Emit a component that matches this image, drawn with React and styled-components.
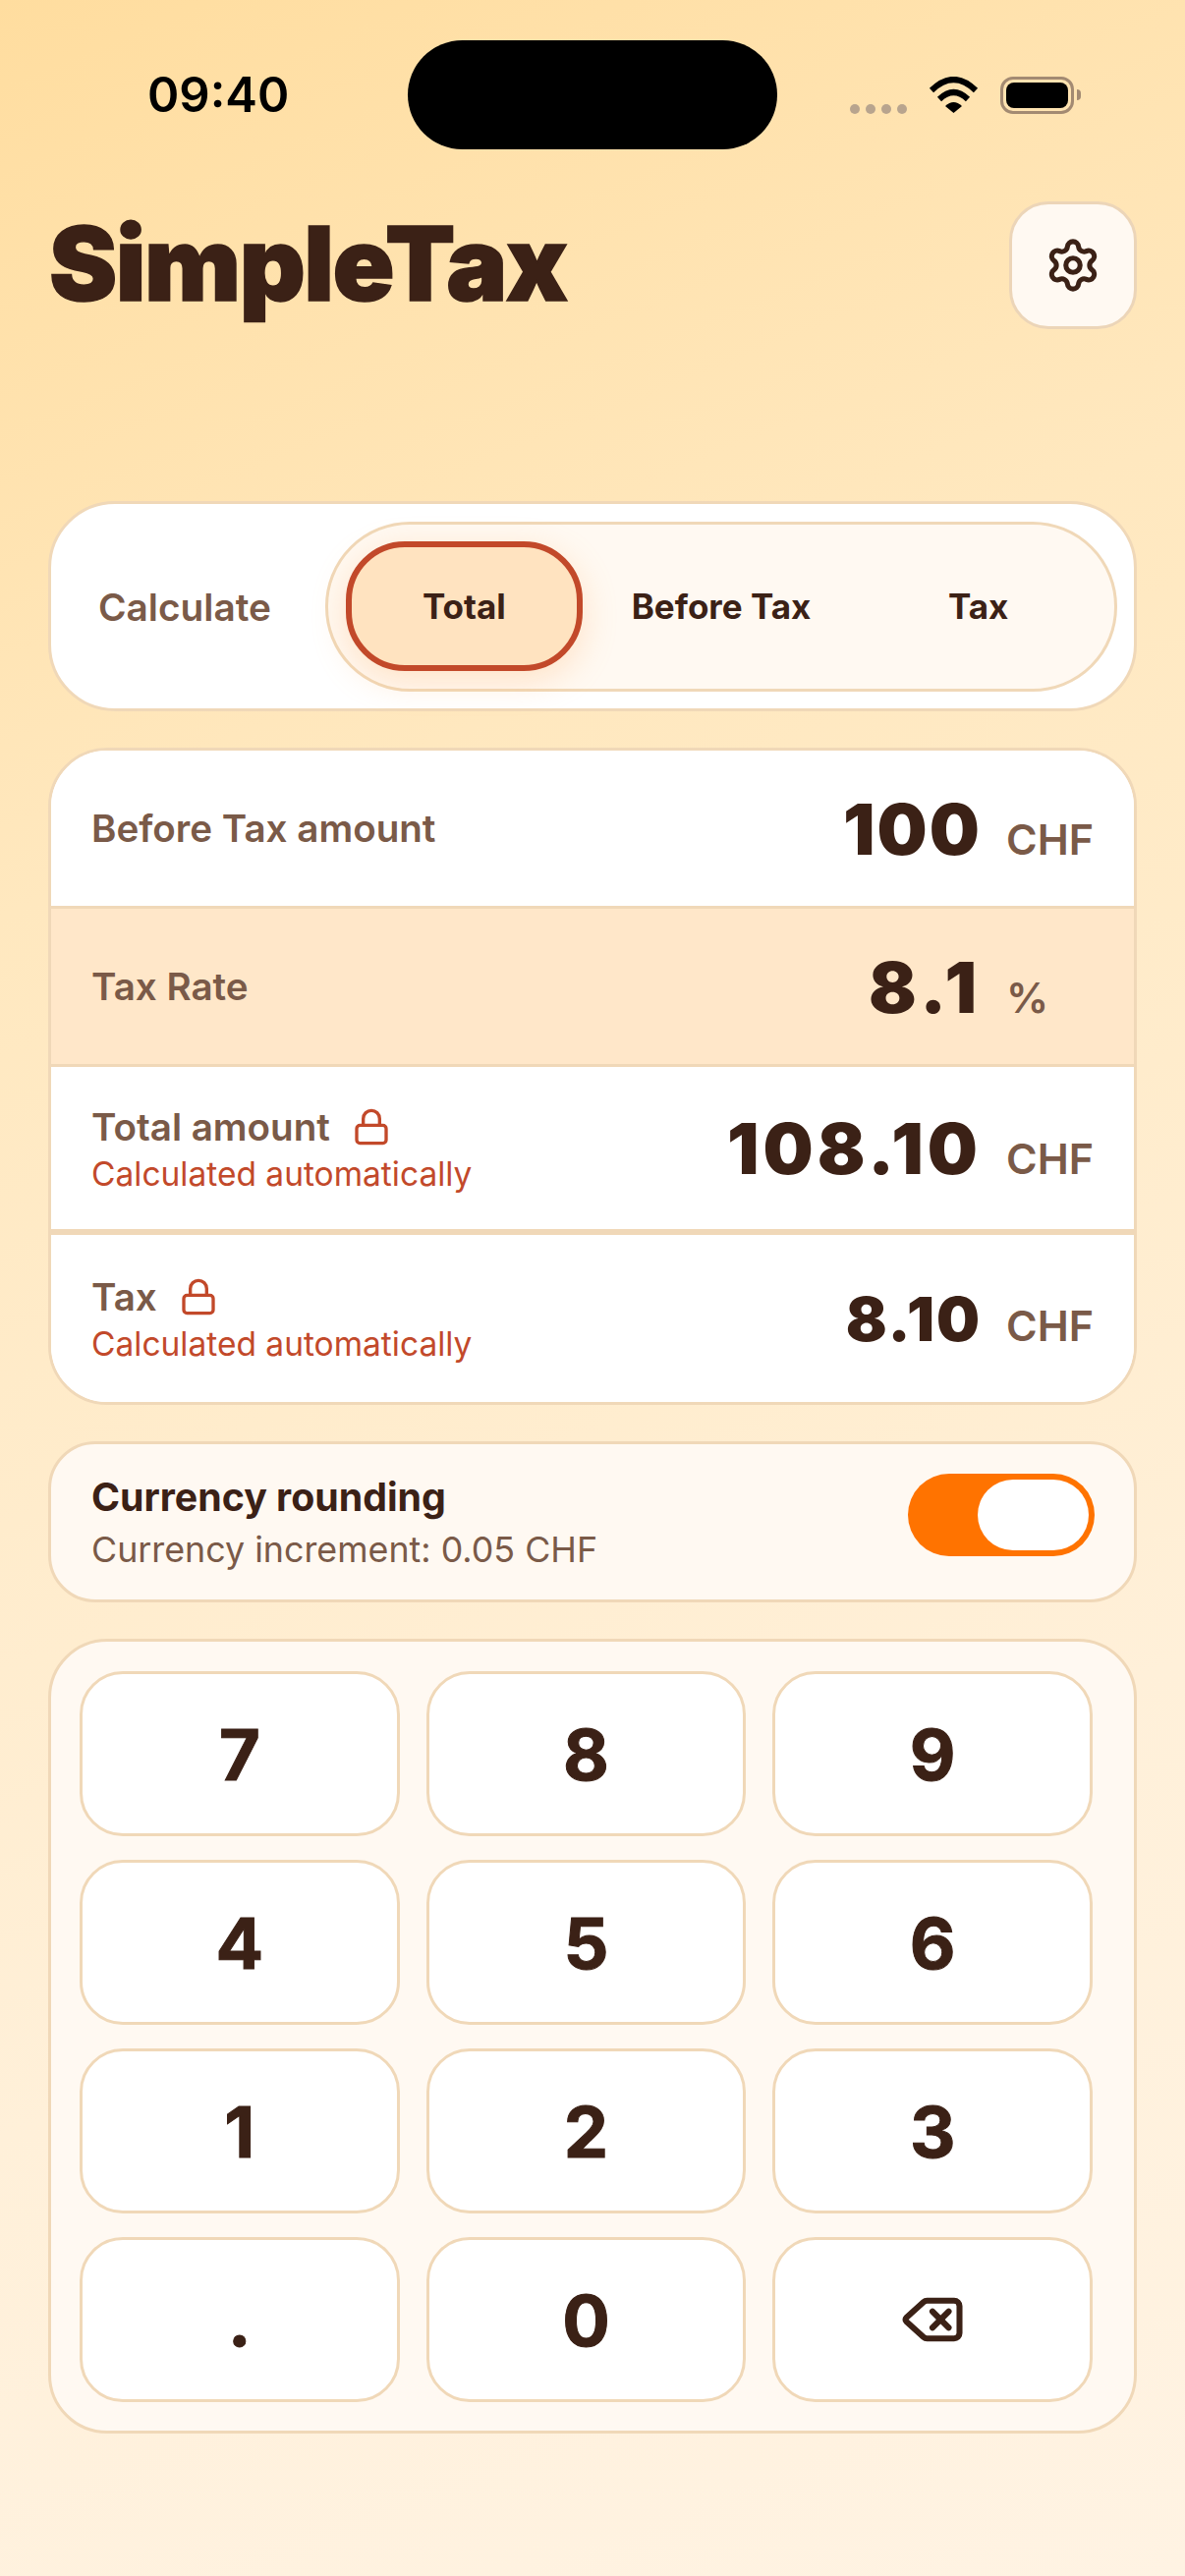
import React from "react";
import styled, { createGlobalStyle } from "styled-components";
import { Settings, Lock, Delete } from "lucide-react";

const INK = "#3b2116";
const MUTED = "#7a5a48";
const LINE = "#f0d8b8";
const RUST = "#c2492a";
const CREAM = "#fff9f2";

const GlobalStyle = createGlobalStyle`
  * { box-sizing: border-box; }
  html, body { margin: 0; padding: 0; }
  body {
    width: 1206px;
    height: 2622px;
    overflow: hidden;
    font-family: Inter, "Noto Sans", sans-serif;
    background: linear-gradient(158deg, #ffdd9f 0%, #ffe8bf 30%, #fff0d9 70%, #fff3e3 100%);
  }
`;

const Page = styled.div`
  display: flex;
  flex-direction: column;
  padding: 41px 49px 0 49px;
`;

const StatusBar = styled.div`
  display: grid;
  grid-template-columns: 366px 376px 1fr;
  align-items: center;
  height: 111px;
`;

const Time = styled.div`
  padding-left: 101px;
  font-size: 49px;
  font-weight: 600;
  color: #000;
`;

const Island = styled.div`
  height: 111px;
  background: #000;
  border-radius: 56px;
`;

const StatusIcons = styled.div`
  display: flex;
  align-items: center;
  padding-left: 74px;
`;

const Dots = styled.div`
  display: flex;
  gap: 6px;
  margin: 28px 22px 0 0;
`;

const Dot = styled.span`
  width: 10px;
  height: 10px;
  border-radius: 50%;
  background: #b8a48e;
`;

const Battery = styled.div`
  display: flex;
  align-items: center;
  gap: 3px;
  margin-left: 22px;
`;

const BatteryShell = styled.div`
  width: 75px;
  height: 38px;
  padding: 3px;
  border: 3px solid #a38a72;
  border-radius: 13px;
`;

const BatteryFill = styled.div`
  height: 100%;
  background: #000;
  border-radius: 8px;
`;

const BatteryNub = styled.div`
  width: 4px;
  height: 11px;
  background: #a38a72;
  border-radius: 0 4px 4px 0;
`;

const Header = styled.header`
  display: flex;
  align-items: center;
  justify-content: space-between;
  height: 130px;
  margin: 53px 0 175px;
`;

const Title = styled.h1`
  margin: -4px 0 0 1px;
  font-size: 104px;
  font-weight: 900;
  letter-spacing: -1.5px;
  -webkit-text-stroke: 1.5px ${INK};
  color: ${INK};
`;

const IconButton = styled.button`
  display: flex;
  align-items: center;
  justify-content: center;
  width: 130px;
  height: 130px;
  padding: 0;
  color: ${INK};
  background: ${CREAM};
  border: 3px solid #ecd5b8;
  border-radius: 40px;
`;

const Stack = styled.div`
  display: flex;
  flex-direction: column;
  gap: 37px;
`;

const CalcCard = styled.section`
  display: flex;
  align-items: center;
  height: 214px;
  padding: 0 17px 0 48px;
  background: #fff;
  border: 3px solid ${LINE};
  border-radius: 68px;
`;

const CalcLabel = styled.span`
  width: 231px;
  font-size: 38.800px;
  font-weight: 600;
  color: ${MUTED};
`;

const Segment = styled.div`
  display: flex;
  flex: 1;
  align-items: center;
  gap: 21px;
  height: 173px;
  padding: 0 18px;
  background: ${CREAM};
  border: 3px solid ${LINE};
  border-radius: 86px;
`;

const SegmentItem = styled.div`
  display: flex;
  flex: 1;
  align-items: center;
  justify-content: center;
  height: 132px;
  font-size: 35px;
  font-weight: 700;
  color: ${INK};
  border-radius: 60px;
  background: ${(p) => (p.$active ? "#ffe3c0" : "transparent")};
  border: 6px solid ${(p) => (p.$active ? RUST : "transparent")};
  box-shadow: ${(p) => (p.$active ? "0 10px 34px rgba(255, 175, 100, 0.3)" : "none")};
`;

const ValuesCard = styled.section`
  display: flex;
  flex-direction: column;
  background: #fff;
  border: 3px solid ${LINE};
  border-radius: 60px;
  overflow: hidden;
`;

const Row = styled.div`
  display: flex;
  align-items: center;
  justify-content: space-between;
  height: ${(p) => p.$height}px;
  padding: 0 44px 0 41px;
  background: ${(p) => (p.$tinted ? "#ffe7c9" : "#fff")};
  border-bottom: ${(p) => p.$rule || 0}px solid ${LINE};
`;

const LabelBlock = styled.div`
  display: flex;
  flex-direction: column;
  margin-top: 4px;
`;

const LabelLine = styled.div`
  display: flex;
  align-items: center;
  gap: 22px;
  height: 48px;
`;

const Label = styled.span`
  font-size: 38.600px;
  font-weight: 600;
  color: ${MUTED};
`;

const Note = styled.span`
  height: 48px;
  line-height: 48px;
  font-size: 33.500px;
  color: ${RUST};
`;

const Amount = styled.div`
  display: flex;
  align-items: baseline;
  gap: 25px;
`;

const Value = styled.span`
  font-size: ${(p) => p.$size}px;
  font-weight: 900;
  letter-spacing: ${(p) => p.$track || 2}px;
  color: ${INK};
`;

const Unit = styled.span`
  width: 86px;
  font-size: 43px;
  font-weight: 600;
  color: ${MUTED};
`;

const RoundingCard = styled.section`
  display: flex;
  align-items: center;
  justify-content: space-between;
  height: 164px;
  padding: 0 40px 0 41px;
  background: ${CREAM};
  border: 3px solid ${LINE};
  border-radius: 48px;
`;

const RoundingTitle = styled.div`
  font-size: 39.300px;
  font-weight: 700;
  color: ${INK};
`;

const RoundingSub = styled.div`
  margin-top: 8px;
  font-size: 35.800px;
  color: ${MUTED};
`;

const Toggle = styled.div`
  display: flex;
  justify-content: flex-end;
  width: 190px;
  height: 84px;
  padding: 6px;
  margin-bottom: 14px;
  background: #ff7300;
  border-radius: 42px;
`;

const Knob = styled.div`
  width: 113px;
  height: 72px;
  background: #fff;
  border-radius: 36px;
`;

const Keypad = styled.section`
  display: grid;
  grid-template-columns: repeat(3, 1fr);
  grid-auto-rows: 168px;
  gap: 24px 27px;
  padding: 30px 42px 29px 29px;
  background: ${CREAM};
  border: 3px solid ${LINE};
  border-radius: 60px;
`;

const Key = styled.button`
  display: flex;
  align-items: center;
  justify-content: center;
  padding: 0;
  font-family: Inter, "Noto Sans", sans-serif;
  font-size: 72px;
  font-weight: 700;
  -webkit-text-stroke: 1px ${INK};
  color: ${INK};
  background: #fff;
  border: 3px solid ${LINE};
  border-radius: 44px;
`;

const Wifi = () => (
  <svg width="51" height="37" viewBox="0 0 51 37" fill="none" stroke="#000" strokeWidth="6">
    <path d="M3 14Q25.500 -8 48 14" />
    <path d="M11 23Q25.500 9 40 23" />
    <path d="M17 30Q25.500 22 34 30L25.500 37Z" fill="#000" stroke="none" />
  </svg>
);

const keys = ["7", "8", "9", "4", "5", "6", "1", "2", "3", ".", "0"];

export default function App() {
  return (
    <>
      <GlobalStyle />
      <Page>
        <StatusBar>
          <Time>09:40</Time>
          <Island />
          <StatusIcons>
            <Dots>
              <Dot />
              <Dot />
              <Dot />
              <Dot />
            </Dots>
            <Wifi />
            <Battery>
              <BatteryShell>
                <BatteryFill />
              </BatteryShell>
              <BatteryNub />
            </Battery>
          </StatusIcons>
        </StatusBar>

        <Header>
          <Title>SimpleTax</Title>
          <IconButton aria-label="Settings">
            <Settings size={58} strokeWidth={2.1} />
          </IconButton>
        </Header>

        <Stack>
          <CalcCard>
            <CalcLabel>Calculate</CalcLabel>
            <Segment>
              <SegmentItem $active>Total</SegmentItem>
              <SegmentItem>Before Tax</SegmentItem>
              <SegmentItem>Tax</SegmentItem>
            </Segment>
          </CalcCard>

          <ValuesCard>
            <Row $height={161} $rule={3}>
              <Label>Before Tax amount</Label>
              <Amount>
                <Value $size={72}>100</Value>
                <Unit>CHF</Unit>
              </Amount>
            </Row>
            <Row $height={161} $rule={3} $tinted>
              <Label>Tax Rate</Label>
              <Amount>
                <Value $size={72} $track={5}>8.1</Value>
                <Unit>%</Unit>
              </Amount>
            </Row>
            <Row $height={171} $rule={6}>
              <LabelBlock>
                <LabelLine>
                  <Label>Total amount</Label>
                  <Lock size={40} strokeWidth={2} color={RUST} />
                </LabelLine>
                <Note>Calculated automatically</Note>
              </LabelBlock>
              <Amount>
                <Value $size={72} $track={4}>108.10</Value>
                <Unit>CHF</Unit>
              </Amount>
            </Row>
            <Row $height={170}>
              <LabelBlock>
                <LabelLine>
                  <Label>Tax</Label>
                  <Lock size={40} strokeWidth={2} color={RUST} />
                </LabelLine>
                <Note>Calculated automatically</Note>
              </LabelBlock>
              <Amount>
                <Value $size={62}>8.10</Value>
                <Unit>CHF</Unit>
              </Amount>
            </Row>
          </ValuesCard>

          <RoundingCard>
            <div>
              <RoundingTitle>Currency rounding</RoundingTitle>
              <RoundingSub>Currency increment: 0.05 CHF</RoundingSub>
            </div>
            <Toggle>
              <Knob />
            </Toggle>
          </RoundingCard>

          <Keypad>
            {keys.map((k) => (
              <Key key={k}>{k}</Key>
            ))}
            <Key aria-label="Backspace">
              <Delete size={66} strokeWidth={2.2} />
            </Key>
          </Keypad>
        </Stack>
      </Page>
    </>
  );
}
